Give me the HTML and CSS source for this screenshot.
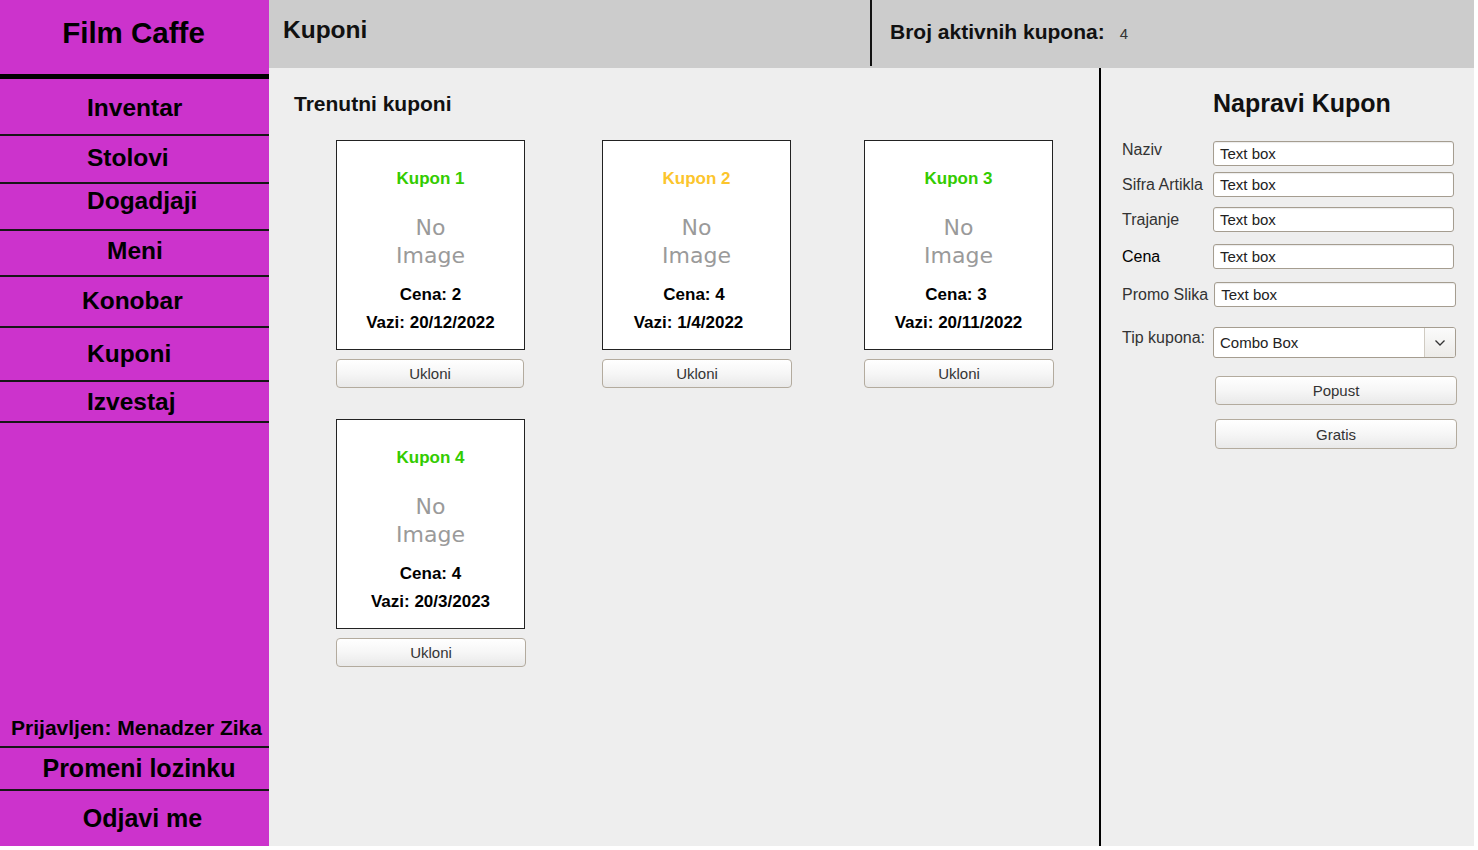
FILE: index.html
```html
<!DOCTYPE html>
<html lang="sr">
<head>
<meta charset="utf-8">
<title>Film Caffe - Kuponi</title>
<link rel="stylesheet" href="styles.css">
</head>
<body>
<div class="app">
  <aside class="sidebar">
    <div class="brand">Film Caffe</div>
    <nav class="nav">
      <div class="nav-item ni-inventar">Inventar</div>
      <div class="nav-item ni-stolovi">Stolovi</div>
      <div class="nav-item ni-dogadjaji">Dogadjaji</div>
      <div class="nav-item ni-meni">Meni</div>
      <div class="nav-item ni-konobar">Konobar</div>
      <div class="nav-item ni-kuponi">Kuponi</div>
      <div class="nav-item ni-izvestaj">Izvestaj</div>
    </nav>
    <div class="spacer"></div>
    <div class="user">Prijavljen: Menadzer Zika</div>
    <div class="bottom-item bi-lozinka">Promeni lozinku</div>
    <div class="bottom-item bi-odjavi">Odjavi me</div>
  </aside>

  <div class="main">
    <header class="topbar">
      <div class="page-title">Kuponi</div>
      <div class="topbar-sep"></div>
      <div class="count">
        <span class="count-label">Broj aktivnih kupona:</span>
        <span class="count-value">4</span>
      </div>
    </header>

    <div class="content">
      <section class="coupons">
        <h2 class="section-title">Trenutni kuponi</h2>
        <div class="coupon-grid">
          <div class="coupon">
            <div class="card">
              <div class="card-title green">Kupon 1</div>
              <div class="no-image">No<br>Image</div>
              <div class="card-line">Cena: 2</div>
              <div class="card-line">Vazi: 20/12/2022</div>
            </div>
            <button class="btn btn-narrow">Ukloni</button>
          </div>
          <div class="coupon">
            <div class="card">
              <div class="card-title yellow">Kupon 2</div>
              <div class="no-image">No<br>Image</div>
              <div class="card-line shift-left-s">Cena: 4</div>
              <div class="card-line shift-left">Vazi: 1/4/2022</div>
            </div>
            <button class="btn">Ukloni</button>
          </div>
          <div class="coupon">
            <div class="card">
              <div class="card-title green">Kupon 3</div>
              <div class="no-image">No<br>Image</div>
              <div class="card-line shift-left-s">Cena: 3</div>
              <div class="card-line">Vazi: 20/11/2022</div>
            </div>
            <button class="btn">Ukloni</button>
          </div>
          <div class="coupon">
            <div class="card">
              <div class="card-title green">Kupon 4</div>
              <div class="no-image">No<br>Image</div>
              <div class="card-line">Cena: 4</div>
              <div class="card-line">Vazi: 20/3/2023</div>
            </div>
            <button class="btn">Ukloni</button>
          </div>
        </div>
      </section>

      <section class="form-panel">
        <h2 class="form-title">Napravi Kupon</h2>
        <div class="form-row row-naziv">
          <label class="label label-up">Naziv</label>
          <div class="textbox">Text box</div>
        </div>
        <div class="form-row row-sifra">
          <label class="label">Sifra Artikla</label>
          <div class="textbox">Text box</div>
        </div>
        <div class="form-row row-trajanje">
          <label class="label">Trajanje</label>
          <div class="textbox">Text box</div>
        </div>
        <div class="form-row row-cena">
          <label class="label label-dark">Cena</label>
          <div class="textbox">Text box</div>
        </div>
        <div class="form-row row-promo">
          <label class="label label-auto">Promo Slika</label>
          <div class="textbox">Text box</div>
        </div>
        <div class="form-row row-tip">
          <label class="label label-top">Tip kupona:</label>
          <div class="combo">
            <span class="combo-text">Combo Box</span>
            <span class="combo-arrow">
              <svg width="12" height="8" viewBox="0 0 12 8"><path d="M1.5 1.5 L6 6 L10.5 1.5" fill="none" stroke="#333" stroke-width="1.3"/></svg>
            </span>
          </div>
        </div>
        <button class="btn btn-form row-popust">Popust</button>
        <button class="btn btn-form row-gratis">Gratis</button>
      </section>
    </div>
  </div>
</div>
</body>
</html>
```

FILE: styles.css
```css
* { box-sizing: border-box; }

html, body {
  margin: 0;
  padding: 0;
  background: #ffffff;
}

body {
  font-family: "Liberation Sans", Arial, sans-serif;
  color: #000;
}

.app {
  width: 1474px;
  height: 846px;
  display: grid;
  grid-template-columns: 269px 1fr;
}

/* ---------- Sidebar ---------- */
.sidebar {
  background: #cc33cc;
  display: flex;
  flex-direction: column;
  font-weight: 700;
  color: #000;
}

.brand {
  height: 79px;
  border-bottom: 5px solid #000;
  text-align: center;
  font-size: 29.5px;
  line-height: 34px;
  padding-top: 16px;
  padding-right: 2px;
}

.nav { display: flex; flex-direction: column; }

.nav-item {
  display: flex;
  align-items: center;
  border-bottom: 2px solid #161616;
  font-size: 24.5px;
  line-height: 28px;
  padding-left: 87px;
}

.ni-inventar { height: 57px; padding-top: 2px; }
.ni-stolovi { height: 48px; padding-bottom: 3px; }
.ni-dogadjaji { height: 47px; padding-bottom: 11px; }
.ni-meni { height: 46px; padding-bottom: 4px; padding-left: 107px; }
.ni-konobar { height: 51px; padding-bottom: 2px; padding-left: 82px; }
.ni-kuponi { height: 54px; }
.ni-izvestaj { height: 41px; padding-top: 1px; }

.spacer { flex: 1; }

.user {
  height: 42px;
  border-bottom: 2px solid #161616;
  display: flex;
  align-items: center;
  justify-content: center;
  font-size: 21px;
  line-height: 24px;
  padding-top: 3px;
  padding-left: 4px;
}

.bottom-item {
  display: flex;
  align-items: center;
  justify-content: center;
  font-size: 25px;
  line-height: 28px;
}

.bi-lozinka {
  height: 43px;
  border-bottom: 2px solid #161616;
  padding-left: 9px;
  padding-bottom: 1px;
}

.bi-odjavi {
  height: 55px;
  padding-left: 16px;
  padding-bottom: 2px;
}

/* ---------- Main ---------- */
.main {
  display: grid;
  grid-template-rows: 68px 1fr;
  min-width: 0;
}

.topbar {
  background: #cccccc;
  display: flex;
  align-items: flex-start;
}

.page-title {
  width: 601px;
  height: 68px;
  padding-left: 14px;
  padding-top: 14px;
  font-weight: 700;
  font-size: 24.5px;
  line-height: 32px;
  color: #111;
}

.topbar-sep {
  width: 2px;
  height: 66px;
  background: #111;
}

.count {
  display: flex;
  align-items: baseline;
  padding-left: 18px;
  padding-top: 19px;
}

.count-label {
  font-weight: 700;
  font-size: 21px;
  line-height: 26px;
  color: #111;
}

.count-value {
  margin-left: 15px;
  font-size: 15px;
  color: #333;
}

.content {
  background: #eeeeee;
  display: grid;
  grid-template-columns: 830px 1fr;
}

/* ---------- Coupons ---------- */
.coupons {
  padding-left: 25px;
  padding-top: 24px;
}

.section-title {
  margin: 0;
  font-weight: 700;
  font-size: 21px;
  line-height: 24px;
  color: #111;
}

.coupon-grid {
  margin-top: 24px;
  margin-left: 42px;
  display: grid;
  grid-template-columns: 266px 262px 190px;
  row-gap: 31px;
}

.coupon {
  width: 190px;
  display: flex;
  flex-direction: column;
}

.card {
  width: 189px;
  height: 210px;
  background: #fff;
  border: 1px solid #222;
  padding-top: 28px;
  text-align: center;
  font-weight: 700;
}

.card-title {
  font-size: 17px;
  line-height: 20px;
}

.green { color: #33cc00; }
.yellow { color: #fcc52c; }

.no-image {
  margin-top: 25px;
  font-family: "DejaVu Sans", sans-serif;
  font-weight: 400;
  font-size: 22px;
  line-height: 28px;
  color: #9a9a9a;
}

.card-line {
  font-size: 17px;
  line-height: 28px;
  color: #000;
}

.no-image + .card-line { margin-top: 11px; }

.shift-left { padding-right: 16px; }
.shift-left-s { padding-right: 5px; }

.btn {
  display: block;
  width: 190px;
  height: 29px;
  margin-top: 9px;
  padding: 0;
  border: 1px solid #b3ab9e;
  border-radius: 4px;
  background: linear-gradient(#ffffff 0%, #f6f6f6 50%, #e9e9e9 100%);
  font-family: "Liberation Sans", Arial, sans-serif;
  font-size: 15px;
  color: #333;
  text-align: center;
}

.btn-narrow { width: 188px; }

/* ---------- Form ---------- */
.form-panel {
  border-left: 2px solid #000;
  padding-left: 21px;
  padding-top: 20px;
  display: flex;
  flex-direction: column;
}

.form-title {
  margin: 0 0 0 91px;
  font-weight: 700;
  font-size: 25px;
  line-height: 30px;
  color: #111;
}

.form-row {
  display: flex;
  align-items: center;
}

.label {
  min-width: 91px;
  font-size: 16px;
  line-height: 20px;
  color: #333;
}

.label-up { padding-bottom: 6px; }
.label-dark { color: #000; }
.label-auto { min-width: 0; margin-right: 6px; }
.label-top { align-self: flex-start; padding-top: 1px; }

.textbox {
  width: 241px;
  height: 25px;
  background: #fff;
  border: 1px solid #a59d90;
  border-radius: 3px;
  box-shadow: inset 0 1px 1px rgba(0,0,0,0.08);
  padding-left: 6px;
  font-size: 15px;
  line-height: 23px;
  color: #222;
}

.row-naziv { margin-top: 22px; }
.row-sifra { margin-top: 6px; }
.row-trajanje { margin-top: 10px; }
.row-cena { margin-top: 12px; }
.row-promo { margin-top: 13px; }
.row-promo .textbox { width: 242px; }
.row-tip { margin-top: 20px; }

.combo {
  width: 243px;
  height: 31px;
  display: flex;
  background: #fff;
  border: 1px solid #a59d90;
  border-radius: 3px;
  overflow: hidden;
}

.combo-text {
  flex: 1;
  padding-left: 6px;
  font-size: 15px;
  line-height: 29px;
  color: #222;
}

.combo-arrow {
  width: 31px;
  border-left: 1px solid #d0cbc2;
  background: linear-gradient(#fbfbfb, #ecebe8);
  display: flex;
  align-items: center;
  justify-content: center;
}

.btn-form {
  width: 242px;
  margin-left: 93px;
}

.row-popust { margin-top: 18px; height: 29px; }
.row-gratis { margin-top: 14px; height: 30px; }
```
